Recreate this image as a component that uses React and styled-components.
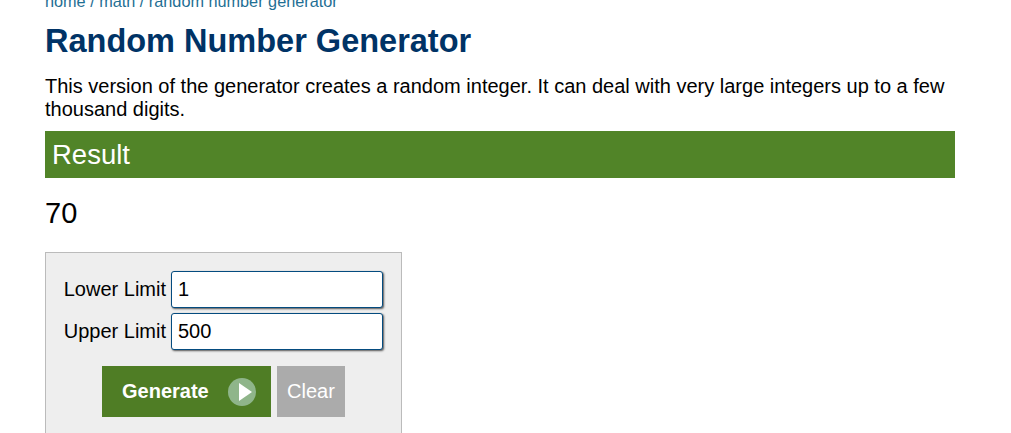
import React from 'react'
import styled, { createGlobalStyle } from 'styled-components'

const Global = createGlobalStyle`
  html, body {
    margin: 0;
    height: 433px;
    overflow: hidden;
    background: #fff;
    font-family: "Liberation Sans", Arial, sans-serif;
    color: #000;
  }
`

const Page = styled.div`
  width: 910px;
  margin: -7px 0 0 45px;
`

const Breadcrumb = styled.div`
  font-size: 16.25px;
  line-height: 16px;
  color: #1f6f94;
`

const Title = styled.h1`
  margin: 13px 0 0 0;
  font-size: 32.5px;
  line-height: 38px;
  font-weight: bold;
  color: #003366;
`

const Intro = styled.p`
  margin: 15px 0 0 0;
  font-size: 20px;
  line-height: 23px;
`

const ResultBar = styled.div`
  margin-top: 10px;
  height: 47px;
  padding-left: 7px;
  background: #518428;
  color: #fff;
  font-size: 27.5px;
  line-height: 47px;
`

const ResultValue = styled.div`
  margin-top: 17px;
  font-size: 29px;
  line-height: 36px;
`

const FormBox = styled.div`
  margin-top: 21px;
  width: 357px;
  height: 200px;
  border: 1px solid #bbb;
  background: #eee;
  padding: 18px 18px 0 18px;
  box-sizing: border-box;
`

const Row = styled.div`
  display: flex;
  align-items: center;
  justify-content: flex-end;
  gap: 5px;
  margin-bottom: 5px;
`

const Label = styled.label`
  font-size: 20px;
  white-space: nowrap;
`

const Field = styled.input`
  box-sizing: border-box;
  width: 212px;
  height: 37px;
  padding: 0 6px;
  border: 1px solid #044b7f;
  border-radius: 3px;
  background: #fff;
  box-shadow: 1px 1px 2px #555;
  font-family: inherit;
  font-size: 20px;
  color: #000;
  outline: none;
`

const Buttons = styled.div`
  display: flex;
  justify-content: center;
  gap: 6px;
  margin-top: 16px;
`

const GenerateButton = styled.button`
  display: flex;
  align-items: center;
  gap: 19px;
  height: 51px;
  width: 169px;
  padding: 0 0 0 20px;
  border: 0;
  background: #4f7d25;
  color: #fff;
  font-family: inherit;
  font-size: 20px;
  font-weight: bold;
`

const PlayIcon = styled.svg`
  width: 28px;
  height: 28px;
`

const ClearButton = styled.button`
  height: 51px;
  width: 68px;
  padding: 0;
  border: 0;
  background: #ababab;
  color: #fff;
  font-family: inherit;
  font-size: 20px;
`

export default function App() {
  return (
    <>
      <Global />
      <Page>
        <Breadcrumb>home / math / random number generator</Breadcrumb>
        <Title>Random Number Generator</Title>
        <Intro>
          This version of the generator creates a random integer. It can deal with very large integers up to a few
          thousand digits.
        </Intro>
        <ResultBar>Result</ResultBar>
        <ResultValue>70</ResultValue>
        <FormBox>
          <Row>
            <Label>Lower Limit</Label>
            <Field defaultValue="1" />
          </Row>
          <Row>
            <Label>Upper Limit</Label>
            <Field defaultValue="500" />
          </Row>
          <Buttons>
            <GenerateButton>
              Generate
              <PlayIcon viewBox="0 0 28 28">
                <circle cx="14" cy="14" r="14" fill="#8fb58a" />
                <polygon points="11,5 24,14 11,23" fill="#fff" />
              </PlayIcon>
            </GenerateButton>
            <ClearButton>Clear</ClearButton>
          </Buttons>
        </FormBox>
      </Page>
    </>
  )
}
